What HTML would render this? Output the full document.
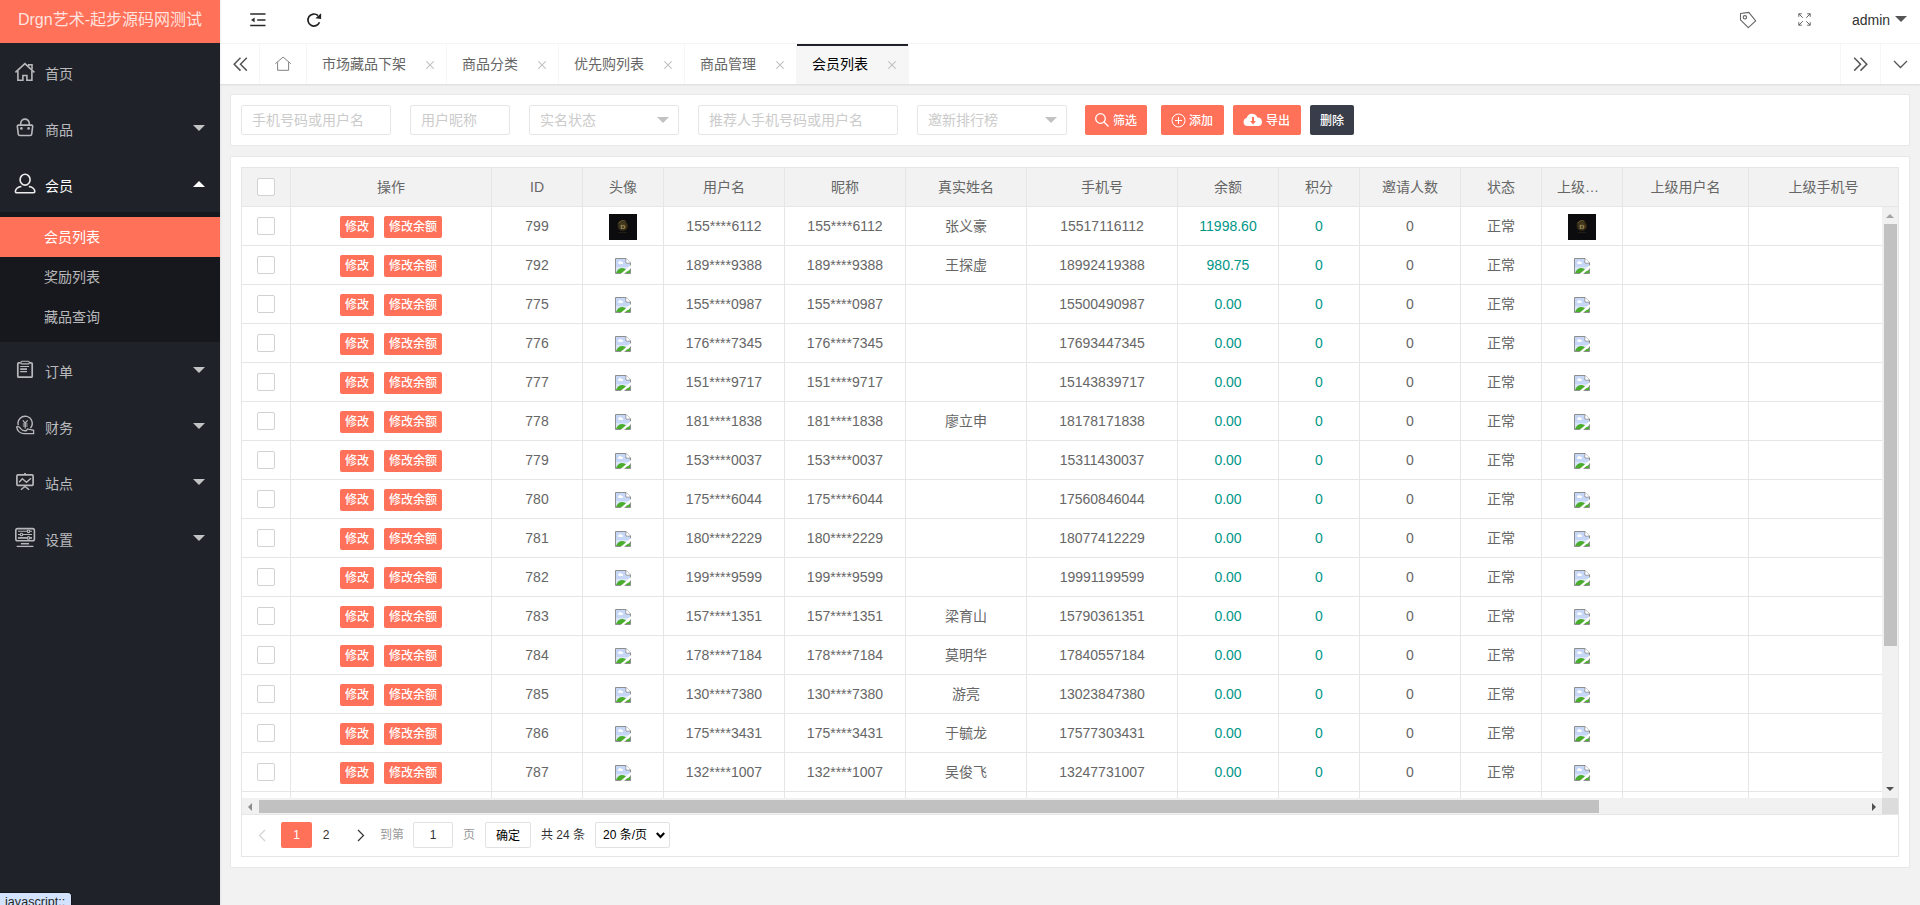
<!DOCTYPE html>
<html lang="zh-CN">
<head>
<meta charset="utf-8">
<title>会员列表</title>
<style>
*{box-sizing:border-box;margin:0;padding:0}
html,body{width:1920px;height:905px;overflow:hidden}
body{font:14px/1 "Liberation Sans","Noto Sans CJK SC",sans-serif;background:#f2f2f2;color:#666;position:relative}
a{text-decoration:none;color:inherit}
i{font-style:normal}
svg{display:block}
.abs{position:absolute}

/* ---------- sidebar ---------- */
#side{position:absolute;left:0;top:0;width:220px;height:905px;background:#20222a;color:#d9dadb;z-index:5;box-shadow:1px 0 2px 0 rgba(0,0,0,.06)}
#logo{position:absolute;left:0;top:0;width:220px;height:43px;background:#FF7159;color:rgba(255,255,255,.82);font-size:16px;line-height:39px;text-align:center;white-space:nowrap}
.nav{position:absolute;left:0;top:44px;width:220px}
.ni{position:relative;height:56px;line-height:60px;padding-left:45px;font-size:14px;color:rgba(255,255,255,.7)}
.ni.on{color:#fff}
.ni svg.ic{position:absolute;left:14px;top:16px}
.ni .ar{position:absolute;right:15px;top:25px;width:0;height:0;border:6px solid transparent;border-top-color:#c2c3c4;border-bottom-width:0}
.ni .ar.up{border-top-width:0;border-bottom-width:6px;border-bottom-color:#fff;border-top-color:transparent}
.sub{background:#16181d;padding:5px 0}
.sub a{display:block;height:40px;line-height:40px;padding-left:44px;font-size:14px;color:rgba(255,255,255,.7)}
.sub a.on{background:#FF7159;color:#fff}

/* ---------- header ---------- */
#head{position:absolute;left:220px;top:0;width:1700px;height:44px;background:#fff;border-bottom:1px solid #f6f6f6}
#head .hi{position:absolute;top:0}
#admin{position:absolute;left:1632px;top:0;height:40px;line-height:40px;font-size:14px;color:#333}
#admin:after{content:"";position:absolute;left:43px;top:16px;border:6px solid transparent;border-top-color:#555;border-bottom-width:0}

/* ---------- tabs ---------- */
#tabs{position:absolute;left:220px;top:44px;width:1700px;height:40px;background:#fff;box-shadow:0 1px 2px 0 rgba(0,0,0,.1)}
.tb{position:absolute;top:0;height:40px;line-height:40px;border-right:1px solid #f6f6f6;color:#666;font-size:14px;padding-left:15px;white-space:nowrap}
.tb.on{background:#f6f6f6;color:#000}
.tb.on:before{content:"";position:absolute;left:0;top:0;width:100%;height:2px;background:#20222a}
.tb .x{position:absolute;right:12.500px;top:16.500px}
.tc{position:absolute;top:0;width:40px;height:40px}
.tc svg{position:absolute}

/* ---------- cards ---------- */
.card{position:absolute;left:230px;width:1680px;background:#fff;border:1px solid #e8e8e8;border-radius:2px}
.inp{position:absolute;top:10px;height:30px;border:1px solid #e6e6e6;border-radius:2px;background:#fff;line-height:28px;padding-left:10px;color:#cbcbcb;font-size:14px;white-space:nowrap}
.inp .ca{position:absolute;right:9px;top:11px;border:6px solid transparent;border-top-color:#c2c2c2;border-bottom-width:0}
.btn{position:absolute;top:10px;height:30px;line-height:32px;border-radius:2px;background:#FF7159;color:#fff;font-size:12px;white-space:nowrap}
.btn svg{position:absolute}
.btn span{position:absolute;top:0;font-weight:500}

/* ---------- table ---------- */
#tv{position:absolute;left:10px;top:10px;width:1658px;height:690px;border:1px solid #e6e6e6;overflow:hidden}
#th{position:absolute;left:0;top:0;width:1656px;height:39px;background:#f2f2f2;border-bottom:1px solid #e6e6e6;overflow:hidden}
#tbw{position:absolute;left:0;top:39px;width:1640px;height:591px;overflow:hidden}
table{border-collapse:separate;border-spacing:0;table-layout:fixed;width:1657px}
th,td{height:39px;border-right:1px solid #e6e6e6;border-bottom:1px solid #e6e6e6;text-align:center;font-weight:400;font-size:14px;color:#666;vertical-align:middle;white-space:nowrap;overflow:hidden;padding:0}
th{border-bottom:0;height:38px}
td.g{color:#009688}
.el{margin:0 15px;overflow:hidden;text-overflow:ellipsis;white-space:nowrap;line-height:38px;text-align:left}
.cb{display:inline-block;width:18px;height:18px;border:1px solid #d2d2d2;border-radius:2px;background:#fff;vertical-align:middle}
.xs{font-weight:500;position:relative;top:1px;display:inline-block;height:22px;line-height:23px;padding:0 5px;font-size:12px;background:#FF7159;color:#fff;border-radius:2px;vertical-align:middle}
.x2{margin-left:10px}
.bk,.av{display:inline-block;vertical-align:middle}
.av{position:relative;top:1px}
.bk{position:relative;top:1px}

/* scrollbars */
#vs{position:absolute;left:1640px;top:39px;width:17px;height:591px;background:#f1f1f1}
#vs b{position:absolute;left:2px;top:17px;width:13px;height:422px;background:#c1c1c1}
#hs{position:absolute;left:0;top:630px;width:1640px;height:17px;background:#f1f1f1}
#hs b{position:absolute;left:17px;top:2px;width:1340px;height:13px;background:#c1c1c1}
#cn{position:absolute;left:1640px;top:630px;width:17px;height:17px;background:#dcdcdc}
.tri{position:absolute;width:0;height:0;border:4px solid transparent}

/* pagination */
#pg{position:absolute;left:0;top:647px;width:1656px;height:42px;font-size:12px;color:#333}
#pg .p{position:absolute;top:7px;height:26px;line-height:26px}
</style>
</head>
<body>

<div id="side">
  <div id="logo">Drgn艺术-起步源码网测试</div>
  <div class="nav">
    <div class="ni"><svg class="ic" width="24" height="24" viewBox="0 0 24 24" fill="none" stroke="#b7b8bb" stroke-width="1.6"><path d="M1.400 12.400L10.900 3.600l9.500 8.800"/><path d="M3.900 10.800v9.400h5v-4.700h4v4.700h5v-9.400"/><path d="M14.700 6.300V4.800h3.300v4.500"/></svg>首页</div>
    <div class="ni"><svg class="ic" width="24" height="24" viewBox="0 0 24 24" fill="none" stroke="#b7b8bb" stroke-width="1.6"><path d="M4.300 9.100h13.400a1 1 0 011 1.100l-1 8a1.500 1.500 0 01-1.500 1.300H5.800a1.500 1.500 0 01-1.500-1.300l-1-8a1 1 0 011-1.100z"/><path d="M6.700 9.100V7.400a4.300 4.300 0 018.600 0v1.700"/><circle cx="7.400" cy="12.400" r="1.300" fill="#b7b8bb" stroke="none"/><circle cx="14.600" cy="12.400" r="1.300" fill="#b7b8bb" stroke="none"/></svg>商品<i class="ar"></i></div>
    <div class="ni on"><svg class="ic" width="24" height="24" viewBox="0 0 24 24" fill="none" stroke="#ececec" stroke-width="1.6"><ellipse cx="11.100" cy="7.700" rx="5" ry="5.400"/><path d="M7.400 14.500C3.600 14.700 1.400 17.300 1.400 19.500a1.200 1.200 0 001.200 1.200h17a1.200 1.200 0 001.200-1.200c0-2.200-2.200-4.800-6-5"/></svg>会员<i class="ar up"></i></div>
    <div class="sub"><a class="on">会员列表</a><a>奖励列表</a><a>藏品查询</a></div>
    <div class="ni"><svg class="ic" width="24" height="24" viewBox="0 0 24 24" fill="none" stroke="#b7b8bb" stroke-width="1.7"><path d="M6.500 4.800H4.800a1 1 0 00-1 1v12.400a1 1 0 001 1h12.400a1 1 0 001-1V5.800a1 1 0 00-1-1h-1.700"/><rect x="6.900" y="3.200" width="8.400" height="2.700" rx="1" stroke-width="1.100"/><path d="M6.200 8.500h8.800M6.200 13.600h6.800" stroke-width="1.100"/><path d="M6.200 11.100h6.800" stroke-width="1.700"/></svg>订单<i class="ar"></i></div>
    <div class="ni"><svg class="ic" width="24" height="24" viewBox="0 0 24 24" fill="none" stroke="#b7b8bb" stroke-width="1.400"><path d="M4.300 11.300A7.100 7.100 0 1116.500 14"/><path d="M8.800 6.400l2.400 2.800 2.400-2.800M11.200 9.200v5.300M8.800 10h4.800M8.800 12h4.800" stroke-width="1.200"/><path d="M2.700 12.900c1.600-.7 3 .2 4 1.700 1.400 2 3.400 2.500 5.800 2l.9-1.700 6.200 1.400v3.300H9.800c-4 0-6.800-3-7.100-6.700z" stroke-width="1.300"/></svg>财务<i class="ar"></i></div>
    <div class="ni"><svg class="ic" width="24" height="24" viewBox="0 0 24 24" fill="none" stroke="#b7b8bb" stroke-width="1.700"><rect x="2.900" y="4.900" width="16.200" height="10.400" rx="1"/><path d="M11 3v1.900" stroke-width="1.800"/><path d="M5.100 12.300l3.200-3.600 4.200 3.600L17 8.300" stroke-width="1.400"/><path d="M6.900 19.800l4.100-3.300 4.100 3.300" stroke-width="1.400"/></svg>站点<i class="ar"></i></div>
    <div class="ni"><svg class="ic" width="24" height="24" viewBox="0 0 24 24" fill="none" stroke="#b7b8bb" stroke-width="1.600"><rect x="1.800" y="2.600" width="18.600" height="12.100" rx="1.800"/><path d="M4 5.300h14M4 8.500h14" stroke-width="1.100"/><path d="M4 11.900h14" stroke-width="1.700"/><circle cx="14.500" cy="5.300" r="1.300" fill="#20222a" stroke-width="1.100"/><circle cx="7.500" cy="8.500" r="1.300" fill="#20222a" stroke-width="1.100"/><circle cx="14.500" cy="11.900" r="1.300" fill="#20222a" stroke-width="1.100"/><path d="M6.900 17.700h8.100" stroke-width="1.500"/><path d="M2.700 20.400h16.700" stroke-width="1.300"/></svg>设置<i class="ar"></i></div>
  </div>
</div>

<div id="head">
  <svg class="hi" style="left:29px;top:11px" width="18" height="18" viewBox="0 0 18 18" fill="none" stroke="#2a2a2a" stroke-width="1.500"><path d="M1.200 3h15.300M8.200 8.900h8.300M1.200 14.500h15.300"/><path d="M5.600 6.600v4.600L2 8.900z" fill="#2a2a2a" stroke="none"/></svg>
  <svg class="hi" style="left:84px;top:10px" width="20" height="20" viewBox="0 0 20 20" fill="none" stroke="#222" stroke-width="1.700"><path d="M15.500 12.300A6 6 0 1113.900 5.500"/><path d="M17.100 3.300v5.600l-5.700-.6z" fill="#222" stroke="none"/></svg>
  <svg class="hi" style="left:1518px;top:10px" width="20" height="20" viewBox="0 0 20 20" fill="none" stroke="#666" stroke-width="1.100" stroke-linejoin="round"><path d="M2.500 3.500l8.300-1.100 6.900 8.400-7.400 6.900-7.800-7.900z"/><circle cx="6.900" cy="7.300" r="1.700"/></svg>
  <svg class="hi" style="left:1577.500px;top:13px" width="13" height="13" viewBox="0 0 13 13" fill="none" stroke="#666" stroke-width="1"><path d="M.8 3.800V.8h3M.8.800l4 4M12.200 3.800V.8h-3M12.200.800l-4 4M.8 9.200v3h3M.8 12.200l4-4M12.200 9.200v3h-3M12.200 12.200l-4-4"/></svg>
  <div id="admin">admin</div>
</div>

<div id="tabs">
  <div class="tc" style="left:0;border-right:1px solid #f6f6f6"><svg style="left:12.500px;top:13px" width="15" height="15" viewBox="0 0 15 15" fill="none" stroke="#555" stroke-width="1.500"><path d="M7.500.800L1.200 7.200l6.300 6.400M13.800.800L7.500 7.200l6.300 6.400"/></svg></div>
  <div class="tb" style="left:40px;width:47px;padding:0"><svg style="position:absolute;left:15px;top:11px" width="17" height="17" viewBox="0 0 17 17" fill="none" stroke="#808080" stroke-width="1"><path d="M.4 8.700L8.100 2.100l7.700 6.600"/><path d="M2.600 7.200v8.100h11V7.200"/></svg></div>
  <div class="tb" style="left:87px;width:140px">市场藏品下架<svg class="x" width="8" height="8" viewBox="0 0 8 8" stroke="#c2c2c2" stroke-width="1.100"><path d="M.3.300l7.400 7.400M7.700.300L.3 7.700"/></svg></div>
  <div class="tb" style="left:227px;width:112px">商品分类<svg class="x" width="8" height="8" viewBox="0 0 8 8" stroke="#c2c2c2" stroke-width="1.100"><path d="M.3.300l7.400 7.400M7.700.300L.3 7.700"/></svg></div>
  <div class="tb" style="left:339px;width:126px">优先购列表<svg class="x" width="8" height="8" viewBox="0 0 8 8" stroke="#c2c2c2" stroke-width="1.100"><path d="M.3.300l7.400 7.400M7.700.300L.3 7.700"/></svg></div>
  <div class="tb" style="left:465px;width:112px">商品管理<svg class="x" width="8" height="8" viewBox="0 0 8 8" stroke="#c2c2c2" stroke-width="1.100"><path d="M.3.300l7.400 7.400M7.700.300L.3 7.700"/></svg></div>
  <div class="tb on" style="left:577px;width:112px">会员列表<svg class="x" width="8" height="8" viewBox="0 0 8 8" stroke="#c2c2c2" stroke-width="1.100"><path d="M.3.300l7.400 7.400M7.700.300L.3 7.700"/></svg></div>
  <div class="tc" style="left:1620px;border-left:1px solid #f6f6f6"><svg style="left:11.500px;top:13px" width="15" height="15" viewBox="0 0 15 15" fill="none" stroke="#555" stroke-width="1.500"><path d="M1.200.800l6.300 6.400-6.300 6.400M7.500.800l6.300 6.400-6.300 6.400"/></svg></div>
  <div class="tc" style="left:1660px;border-left:1px solid #f6f6f6"><svg style="left:11.500px;top:16px" width="15" height="9" viewBox="0 0 15 9" fill="none" stroke="#555" stroke-width="1.300"><path d="M1 1l6.500 6.500L14 1"/></svg></div>
</div>

<div class="card" style="top:94px;height:52px">
  <div class="inp" style="left:10px;width:150px">手机号码或用户名</div>
  <div class="inp" style="left:179px;width:100px">用户昵称</div>
  <div class="inp" style="left:298px;width:150px">实名状态<i class="ca"></i></div>
  <div class="inp" style="left:467px;width:200px">推荐人手机号码或用户名</div>
  <div class="inp" style="left:686px;width:150px">邀新排行榜<i class="ca"></i></div>
  <a class="btn" style="left:854px;width:62px"><svg style="left:9px;top:7px" width="16" height="16" viewBox="0 0 16 16" fill="none" stroke="#fff" stroke-width="1.300"><circle cx="6.500" cy="6.500" r="4.800"/><path d="M10 10l4.500 4.500"/></svg><span style="left:28px">筛选</span></a>
  <a class="btn" style="left:930px;width:63px"><svg style="left:10px;top:8px" width="15" height="15" viewBox="0 0 15 15" fill="none" stroke="#fff" stroke-width="1"><circle cx="7.500" cy="7.500" r="6.500"/><path d="M7.500 4v7M4 7.500h7"/></svg><span style="left:28px">添加</span></a>
  <a class="btn" style="left:1002px;width:68px"><svg style="left:10px;top:7px" width="20" height="15" viewBox="0 0 20 15" fill="#fff"><path d="M4.500 14a4 4 0 01-.8-7.900 5.500 5.500 0 0110.600-.6A4.300 4.300 0 0115.500 14z"/><path d="M9 5h2v4h2l-3 3.500L7 9h2z" fill="#FF7159"/></svg><span style="left:33px">导出</span></a>
  <a class="btn" style="left:1079px;width:44px;background:#393d49"><span style="left:10px">删除</span></a>
</div>

<div class="card" style="top:156px;height:712px">
  <div id="tv">
    <div id="th"><table><colgroup><col style="width:49px"><col style="width:201px"><col style="width:91px"><col style="width:81px"><col style="width:121px"><col style="width:121px"><col style="width:121px"><col style="width:151px"><col style="width:101px"><col style="width:81px"><col style="width:101px"><col style="width:81px"><col style="width:81px"><col style="width:126px"><col style="width:150px"></colgroup><thead><tr><th><i class="cb"></i></th><th>操作</th><th>ID</th><th>头像</th><th>用户名</th><th>昵称</th><th>真实姓名</th><th>手机号</th><th>余额</th><th>积分</th><th>邀请人数</th><th>状态</th><th><div class="el">上级头像</div></th><th>上级用户名</th><th>上级手机号</th></tr></thead></table></div>
    <div id="tbw"><table><colgroup><col style="width:49px"><col style="width:201px"><col style="width:91px"><col style="width:81px"><col style="width:121px"><col style="width:121px"><col style="width:121px"><col style="width:151px"><col style="width:101px"><col style="width:81px"><col style="width:101px"><col style="width:81px"><col style="width:81px"><col style="width:126px"><col style="width:150px"></colgroup><tbody>
<tr><td><i class="cb"></i></td><td><a class="xs">修改</a><a class="xs x2">修改余额</a></td><td>799</td><td><span class="av"><svg width="28" height="26" viewBox="0 0 28 26"><defs><radialGradient id="gd"><stop offset="0" stop-color="#5a4b26"/><stop offset=".7" stop-color="#3a3019"/><stop offset="1" stop-color="#17130c"/></radialGradient></defs><rect width="28" height="26" fill="#0c0b0d"/><circle cx="13.700" cy="11.900" r="5.600" fill="url(#gd)"/><path d="M9.500 9.500a5 5 0 017-2.200" fill="none" stroke="#8a7640" stroke-width=".8"/><text x="13.900" y="14.600" text-anchor="middle" font-family="Liberation Serif, serif" font-size="7" font-weight="400" fill="#b5a676">D</text><rect x="9.500" y="18" width="8.500" height=".8" fill="#2a2418"/></svg></span></td><td>155****6112</td><td>155****6112</td><td>张义豪</td><td>15517116112</td><td class="g">11998.60</td><td class="g">0</td><td>0</td><td>正常</td><td><span class="av"><svg width="28" height="26" viewBox="0 0 28 26"><defs><radialGradient id="gd"><stop offset="0" stop-color="#5a4b26"/><stop offset=".7" stop-color="#3a3019"/><stop offset="1" stop-color="#17130c"/></radialGradient></defs><rect width="28" height="26" fill="#0c0b0d"/><circle cx="13.700" cy="11.900" r="5.600" fill="url(#gd)"/><path d="M9.500 9.500a5 5 0 017-2.200" fill="none" stroke="#8a7640" stroke-width=".8"/><text x="13.900" y="14.600" text-anchor="middle" font-family="Liberation Serif, serif" font-size="7" font-weight="400" fill="#b5a676">D</text><rect x="9.500" y="18" width="8.500" height=".8" fill="#2a2418"/></svg></span></td><td></td><td></td></tr>
<tr><td><i class="cb"></i></td><td><a class="xs">修改</a><a class="xs x2">修改余额</a></td><td>792</td><td><svg class="bk" width="16" height="16" viewBox="0 0 16 16"><path d="M.5.500H11L15.500 5v10.500H.5z" fill="#c6d6f7" stroke="#8f8f8f"/><path d="M1 9h14v6H1z" fill="#dbe5fa"/><path d="M11 .5V5h4.500" fill="#fff" stroke="#8f8f8f"/><path d="M11.500 1.200V4.500h3.300z" fill="#fff"/><ellipse cx="5.600" cy="4.900" rx="2.700" ry="1.100" fill="#fff"/><circle cx="5.200" cy="4.200" r="1.200" fill="#fff"/><path d="M1 15C2 11.800 4.800 9.900 7.500 10c2.700.1 5 2 6.300 5z" fill="#4aad2c"/><path d="M11 15l4-3.500V15z" fill="#4aad2c"/><path d="M6.300 16.800L17 7.600" stroke="#fff" stroke-width="2.300"/></svg></td><td>189****9388</td><td>189****9388</td><td>王探虚</td><td>18992419388</td><td class="g">980.75</td><td class="g">0</td><td>0</td><td>正常</td><td><svg class="bk" width="16" height="16" viewBox="0 0 16 16"><path d="M.5.500H11L15.500 5v10.500H.5z" fill="#c6d6f7" stroke="#8f8f8f"/><path d="M1 9h14v6H1z" fill="#dbe5fa"/><path d="M11 .5V5h4.500" fill="#fff" stroke="#8f8f8f"/><path d="M11.500 1.200V4.500h3.300z" fill="#fff"/><ellipse cx="5.600" cy="4.900" rx="2.700" ry="1.100" fill="#fff"/><circle cx="5.200" cy="4.200" r="1.200" fill="#fff"/><path d="M1 15C2 11.800 4.800 9.900 7.500 10c2.700.1 5 2 6.300 5z" fill="#4aad2c"/><path d="M11 15l4-3.500V15z" fill="#4aad2c"/><path d="M6.300 16.800L17 7.600" stroke="#fff" stroke-width="2.300"/></svg></td><td></td><td></td></tr>
<tr><td><i class="cb"></i></td><td><a class="xs">修改</a><a class="xs x2">修改余额</a></td><td>775</td><td><svg class="bk" width="16" height="16" viewBox="0 0 16 16"><path d="M.5.500H11L15.500 5v10.500H.5z" fill="#c6d6f7" stroke="#8f8f8f"/><path d="M1 9h14v6H1z" fill="#dbe5fa"/><path d="M11 .5V5h4.500" fill="#fff" stroke="#8f8f8f"/><path d="M11.500 1.200V4.500h3.300z" fill="#fff"/><ellipse cx="5.600" cy="4.900" rx="2.700" ry="1.100" fill="#fff"/><circle cx="5.200" cy="4.200" r="1.200" fill="#fff"/><path d="M1 15C2 11.800 4.800 9.900 7.500 10c2.700.1 5 2 6.300 5z" fill="#4aad2c"/><path d="M11 15l4-3.500V15z" fill="#4aad2c"/><path d="M6.300 16.800L17 7.600" stroke="#fff" stroke-width="2.300"/></svg></td><td>155****0987</td><td>155****0987</td><td></td><td>15500490987</td><td class="g">0.00</td><td class="g">0</td><td>0</td><td>正常</td><td><svg class="bk" width="16" height="16" viewBox="0 0 16 16"><path d="M.5.500H11L15.500 5v10.500H.5z" fill="#c6d6f7" stroke="#8f8f8f"/><path d="M1 9h14v6H1z" fill="#dbe5fa"/><path d="M11 .5V5h4.500" fill="#fff" stroke="#8f8f8f"/><path d="M11.500 1.200V4.500h3.300z" fill="#fff"/><ellipse cx="5.600" cy="4.900" rx="2.700" ry="1.100" fill="#fff"/><circle cx="5.200" cy="4.200" r="1.200" fill="#fff"/><path d="M1 15C2 11.800 4.800 9.900 7.500 10c2.700.1 5 2 6.300 5z" fill="#4aad2c"/><path d="M11 15l4-3.500V15z" fill="#4aad2c"/><path d="M6.300 16.800L17 7.600" stroke="#fff" stroke-width="2.300"/></svg></td><td></td><td></td></tr>
<tr><td><i class="cb"></i></td><td><a class="xs">修改</a><a class="xs x2">修改余额</a></td><td>776</td><td><svg class="bk" width="16" height="16" viewBox="0 0 16 16"><path d="M.5.500H11L15.500 5v10.500H.5z" fill="#c6d6f7" stroke="#8f8f8f"/><path d="M1 9h14v6H1z" fill="#dbe5fa"/><path d="M11 .5V5h4.500" fill="#fff" stroke="#8f8f8f"/><path d="M11.500 1.200V4.500h3.300z" fill="#fff"/><ellipse cx="5.600" cy="4.900" rx="2.700" ry="1.100" fill="#fff"/><circle cx="5.200" cy="4.200" r="1.200" fill="#fff"/><path d="M1 15C2 11.800 4.800 9.900 7.500 10c2.700.1 5 2 6.300 5z" fill="#4aad2c"/><path d="M11 15l4-3.500V15z" fill="#4aad2c"/><path d="M6.300 16.800L17 7.600" stroke="#fff" stroke-width="2.300"/></svg></td><td>176****7345</td><td>176****7345</td><td></td><td>17693447345</td><td class="g">0.00</td><td class="g">0</td><td>0</td><td>正常</td><td><svg class="bk" width="16" height="16" viewBox="0 0 16 16"><path d="M.5.500H11L15.500 5v10.500H.5z" fill="#c6d6f7" stroke="#8f8f8f"/><path d="M1 9h14v6H1z" fill="#dbe5fa"/><path d="M11 .5V5h4.500" fill="#fff" stroke="#8f8f8f"/><path d="M11.500 1.200V4.500h3.300z" fill="#fff"/><ellipse cx="5.600" cy="4.900" rx="2.700" ry="1.100" fill="#fff"/><circle cx="5.200" cy="4.200" r="1.200" fill="#fff"/><path d="M1 15C2 11.800 4.800 9.900 7.500 10c2.700.1 5 2 6.300 5z" fill="#4aad2c"/><path d="M11 15l4-3.500V15z" fill="#4aad2c"/><path d="M6.300 16.800L17 7.600" stroke="#fff" stroke-width="2.300"/></svg></td><td></td><td></td></tr>
<tr><td><i class="cb"></i></td><td><a class="xs">修改</a><a class="xs x2">修改余额</a></td><td>777</td><td><svg class="bk" width="16" height="16" viewBox="0 0 16 16"><path d="M.5.500H11L15.500 5v10.500H.5z" fill="#c6d6f7" stroke="#8f8f8f"/><path d="M1 9h14v6H1z" fill="#dbe5fa"/><path d="M11 .5V5h4.500" fill="#fff" stroke="#8f8f8f"/><path d="M11.500 1.200V4.500h3.300z" fill="#fff"/><ellipse cx="5.600" cy="4.900" rx="2.700" ry="1.100" fill="#fff"/><circle cx="5.200" cy="4.200" r="1.200" fill="#fff"/><path d="M1 15C2 11.800 4.800 9.900 7.500 10c2.700.1 5 2 6.300 5z" fill="#4aad2c"/><path d="M11 15l4-3.500V15z" fill="#4aad2c"/><path d="M6.300 16.800L17 7.600" stroke="#fff" stroke-width="2.300"/></svg></td><td>151****9717</td><td>151****9717</td><td></td><td>15143839717</td><td class="g">0.00</td><td class="g">0</td><td>0</td><td>正常</td><td><svg class="bk" width="16" height="16" viewBox="0 0 16 16"><path d="M.5.500H11L15.500 5v10.500H.5z" fill="#c6d6f7" stroke="#8f8f8f"/><path d="M1 9h14v6H1z" fill="#dbe5fa"/><path d="M11 .5V5h4.500" fill="#fff" stroke="#8f8f8f"/><path d="M11.500 1.200V4.500h3.300z" fill="#fff"/><ellipse cx="5.600" cy="4.900" rx="2.700" ry="1.100" fill="#fff"/><circle cx="5.200" cy="4.200" r="1.200" fill="#fff"/><path d="M1 15C2 11.800 4.800 9.900 7.500 10c2.700.1 5 2 6.300 5z" fill="#4aad2c"/><path d="M11 15l4-3.500V15z" fill="#4aad2c"/><path d="M6.300 16.800L17 7.600" stroke="#fff" stroke-width="2.300"/></svg></td><td></td><td></td></tr>
<tr><td><i class="cb"></i></td><td><a class="xs">修改</a><a class="xs x2">修改余额</a></td><td>778</td><td><svg class="bk" width="16" height="16" viewBox="0 0 16 16"><path d="M.5.500H11L15.500 5v10.500H.5z" fill="#c6d6f7" stroke="#8f8f8f"/><path d="M1 9h14v6H1z" fill="#dbe5fa"/><path d="M11 .5V5h4.500" fill="#fff" stroke="#8f8f8f"/><path d="M11.500 1.200V4.500h3.300z" fill="#fff"/><ellipse cx="5.600" cy="4.900" rx="2.700" ry="1.100" fill="#fff"/><circle cx="5.200" cy="4.200" r="1.200" fill="#fff"/><path d="M1 15C2 11.800 4.800 9.900 7.500 10c2.700.1 5 2 6.300 5z" fill="#4aad2c"/><path d="M11 15l4-3.500V15z" fill="#4aad2c"/><path d="M6.300 16.800L17 7.600" stroke="#fff" stroke-width="2.300"/></svg></td><td>181****1838</td><td>181****1838</td><td>廖立申</td><td>18178171838</td><td class="g">0.00</td><td class="g">0</td><td>0</td><td>正常</td><td><svg class="bk" width="16" height="16" viewBox="0 0 16 16"><path d="M.5.500H11L15.500 5v10.500H.5z" fill="#c6d6f7" stroke="#8f8f8f"/><path d="M1 9h14v6H1z" fill="#dbe5fa"/><path d="M11 .5V5h4.500" fill="#fff" stroke="#8f8f8f"/><path d="M11.500 1.200V4.500h3.300z" fill="#fff"/><ellipse cx="5.600" cy="4.900" rx="2.700" ry="1.100" fill="#fff"/><circle cx="5.200" cy="4.200" r="1.200" fill="#fff"/><path d="M1 15C2 11.800 4.800 9.900 7.500 10c2.700.1 5 2 6.300 5z" fill="#4aad2c"/><path d="M11 15l4-3.500V15z" fill="#4aad2c"/><path d="M6.300 16.800L17 7.600" stroke="#fff" stroke-width="2.300"/></svg></td><td></td><td></td></tr>
<tr><td><i class="cb"></i></td><td><a class="xs">修改</a><a class="xs x2">修改余额</a></td><td>779</td><td><svg class="bk" width="16" height="16" viewBox="0 0 16 16"><path d="M.5.500H11L15.500 5v10.500H.5z" fill="#c6d6f7" stroke="#8f8f8f"/><path d="M1 9h14v6H1z" fill="#dbe5fa"/><path d="M11 .5V5h4.500" fill="#fff" stroke="#8f8f8f"/><path d="M11.500 1.200V4.500h3.300z" fill="#fff"/><ellipse cx="5.600" cy="4.900" rx="2.700" ry="1.100" fill="#fff"/><circle cx="5.200" cy="4.200" r="1.200" fill="#fff"/><path d="M1 15C2 11.800 4.800 9.900 7.500 10c2.700.1 5 2 6.300 5z" fill="#4aad2c"/><path d="M11 15l4-3.500V15z" fill="#4aad2c"/><path d="M6.300 16.800L17 7.600" stroke="#fff" stroke-width="2.300"/></svg></td><td>153****0037</td><td>153****0037</td><td></td><td>15311430037</td><td class="g">0.00</td><td class="g">0</td><td>0</td><td>正常</td><td><svg class="bk" width="16" height="16" viewBox="0 0 16 16"><path d="M.5.500H11L15.500 5v10.500H.5z" fill="#c6d6f7" stroke="#8f8f8f"/><path d="M1 9h14v6H1z" fill="#dbe5fa"/><path d="M11 .5V5h4.500" fill="#fff" stroke="#8f8f8f"/><path d="M11.500 1.200V4.500h3.300z" fill="#fff"/><ellipse cx="5.600" cy="4.900" rx="2.700" ry="1.100" fill="#fff"/><circle cx="5.200" cy="4.200" r="1.200" fill="#fff"/><path d="M1 15C2 11.800 4.800 9.900 7.500 10c2.700.1 5 2 6.300 5z" fill="#4aad2c"/><path d="M11 15l4-3.500V15z" fill="#4aad2c"/><path d="M6.300 16.800L17 7.600" stroke="#fff" stroke-width="2.300"/></svg></td><td></td><td></td></tr>
<tr><td><i class="cb"></i></td><td><a class="xs">修改</a><a class="xs x2">修改余额</a></td><td>780</td><td><svg class="bk" width="16" height="16" viewBox="0 0 16 16"><path d="M.5.500H11L15.500 5v10.500H.5z" fill="#c6d6f7" stroke="#8f8f8f"/><path d="M1 9h14v6H1z" fill="#dbe5fa"/><path d="M11 .5V5h4.500" fill="#fff" stroke="#8f8f8f"/><path d="M11.500 1.200V4.500h3.300z" fill="#fff"/><ellipse cx="5.600" cy="4.900" rx="2.700" ry="1.100" fill="#fff"/><circle cx="5.200" cy="4.200" r="1.200" fill="#fff"/><path d="M1 15C2 11.800 4.800 9.900 7.500 10c2.700.1 5 2 6.300 5z" fill="#4aad2c"/><path d="M11 15l4-3.500V15z" fill="#4aad2c"/><path d="M6.300 16.800L17 7.600" stroke="#fff" stroke-width="2.300"/></svg></td><td>175****6044</td><td>175****6044</td><td></td><td>17560846044</td><td class="g">0.00</td><td class="g">0</td><td>0</td><td>正常</td><td><svg class="bk" width="16" height="16" viewBox="0 0 16 16"><path d="M.5.500H11L15.500 5v10.500H.5z" fill="#c6d6f7" stroke="#8f8f8f"/><path d="M1 9h14v6H1z" fill="#dbe5fa"/><path d="M11 .5V5h4.500" fill="#fff" stroke="#8f8f8f"/><path d="M11.500 1.200V4.500h3.300z" fill="#fff"/><ellipse cx="5.600" cy="4.900" rx="2.700" ry="1.100" fill="#fff"/><circle cx="5.200" cy="4.200" r="1.200" fill="#fff"/><path d="M1 15C2 11.800 4.800 9.900 7.500 10c2.700.1 5 2 6.300 5z" fill="#4aad2c"/><path d="M11 15l4-3.500V15z" fill="#4aad2c"/><path d="M6.300 16.800L17 7.600" stroke="#fff" stroke-width="2.300"/></svg></td><td></td><td></td></tr>
<tr><td><i class="cb"></i></td><td><a class="xs">修改</a><a class="xs x2">修改余额</a></td><td>781</td><td><svg class="bk" width="16" height="16" viewBox="0 0 16 16"><path d="M.5.500H11L15.500 5v10.500H.5z" fill="#c6d6f7" stroke="#8f8f8f"/><path d="M1 9h14v6H1z" fill="#dbe5fa"/><path d="M11 .5V5h4.500" fill="#fff" stroke="#8f8f8f"/><path d="M11.500 1.200V4.500h3.300z" fill="#fff"/><ellipse cx="5.600" cy="4.900" rx="2.700" ry="1.100" fill="#fff"/><circle cx="5.200" cy="4.200" r="1.200" fill="#fff"/><path d="M1 15C2 11.800 4.800 9.900 7.500 10c2.700.1 5 2 6.300 5z" fill="#4aad2c"/><path d="M11 15l4-3.500V15z" fill="#4aad2c"/><path d="M6.300 16.800L17 7.600" stroke="#fff" stroke-width="2.300"/></svg></td><td>180****2229</td><td>180****2229</td><td></td><td>18077412229</td><td class="g">0.00</td><td class="g">0</td><td>0</td><td>正常</td><td><svg class="bk" width="16" height="16" viewBox="0 0 16 16"><path d="M.5.500H11L15.500 5v10.500H.5z" fill="#c6d6f7" stroke="#8f8f8f"/><path d="M1 9h14v6H1z" fill="#dbe5fa"/><path d="M11 .5V5h4.500" fill="#fff" stroke="#8f8f8f"/><path d="M11.500 1.200V4.500h3.300z" fill="#fff"/><ellipse cx="5.600" cy="4.900" rx="2.700" ry="1.100" fill="#fff"/><circle cx="5.200" cy="4.200" r="1.200" fill="#fff"/><path d="M1 15C2 11.800 4.800 9.900 7.500 10c2.700.1 5 2 6.300 5z" fill="#4aad2c"/><path d="M11 15l4-3.500V15z" fill="#4aad2c"/><path d="M6.300 16.800L17 7.600" stroke="#fff" stroke-width="2.300"/></svg></td><td></td><td></td></tr>
<tr><td><i class="cb"></i></td><td><a class="xs">修改</a><a class="xs x2">修改余额</a></td><td>782</td><td><svg class="bk" width="16" height="16" viewBox="0 0 16 16"><path d="M.5.500H11L15.500 5v10.500H.5z" fill="#c6d6f7" stroke="#8f8f8f"/><path d="M1 9h14v6H1z" fill="#dbe5fa"/><path d="M11 .5V5h4.500" fill="#fff" stroke="#8f8f8f"/><path d="M11.500 1.200V4.500h3.300z" fill="#fff"/><ellipse cx="5.600" cy="4.900" rx="2.700" ry="1.100" fill="#fff"/><circle cx="5.200" cy="4.200" r="1.200" fill="#fff"/><path d="M1 15C2 11.800 4.800 9.900 7.500 10c2.700.1 5 2 6.300 5z" fill="#4aad2c"/><path d="M11 15l4-3.500V15z" fill="#4aad2c"/><path d="M6.300 16.800L17 7.600" stroke="#fff" stroke-width="2.300"/></svg></td><td>199****9599</td><td>199****9599</td><td></td><td>19991199599</td><td class="g">0.00</td><td class="g">0</td><td>0</td><td>正常</td><td><svg class="bk" width="16" height="16" viewBox="0 0 16 16"><path d="M.5.500H11L15.500 5v10.500H.5z" fill="#c6d6f7" stroke="#8f8f8f"/><path d="M1 9h14v6H1z" fill="#dbe5fa"/><path d="M11 .5V5h4.500" fill="#fff" stroke="#8f8f8f"/><path d="M11.500 1.200V4.500h3.300z" fill="#fff"/><ellipse cx="5.600" cy="4.900" rx="2.700" ry="1.100" fill="#fff"/><circle cx="5.200" cy="4.200" r="1.200" fill="#fff"/><path d="M1 15C2 11.800 4.800 9.900 7.500 10c2.700.1 5 2 6.300 5z" fill="#4aad2c"/><path d="M11 15l4-3.500V15z" fill="#4aad2c"/><path d="M6.300 16.800L17 7.600" stroke="#fff" stroke-width="2.300"/></svg></td><td></td><td></td></tr>
<tr><td><i class="cb"></i></td><td><a class="xs">修改</a><a class="xs x2">修改余额</a></td><td>783</td><td><svg class="bk" width="16" height="16" viewBox="0 0 16 16"><path d="M.5.500H11L15.500 5v10.500H.5z" fill="#c6d6f7" stroke="#8f8f8f"/><path d="M1 9h14v6H1z" fill="#dbe5fa"/><path d="M11 .5V5h4.500" fill="#fff" stroke="#8f8f8f"/><path d="M11.500 1.200V4.500h3.300z" fill="#fff"/><ellipse cx="5.600" cy="4.900" rx="2.700" ry="1.100" fill="#fff"/><circle cx="5.200" cy="4.200" r="1.200" fill="#fff"/><path d="M1 15C2 11.800 4.800 9.900 7.500 10c2.700.1 5 2 6.300 5z" fill="#4aad2c"/><path d="M11 15l4-3.500V15z" fill="#4aad2c"/><path d="M6.300 16.800L17 7.600" stroke="#fff" stroke-width="2.300"/></svg></td><td>157****1351</td><td>157****1351</td><td>梁育山</td><td>15790361351</td><td class="g">0.00</td><td class="g">0</td><td>0</td><td>正常</td><td><svg class="bk" width="16" height="16" viewBox="0 0 16 16"><path d="M.5.500H11L15.500 5v10.500H.5z" fill="#c6d6f7" stroke="#8f8f8f"/><path d="M1 9h14v6H1z" fill="#dbe5fa"/><path d="M11 .5V5h4.500" fill="#fff" stroke="#8f8f8f"/><path d="M11.500 1.200V4.500h3.300z" fill="#fff"/><ellipse cx="5.600" cy="4.900" rx="2.700" ry="1.100" fill="#fff"/><circle cx="5.200" cy="4.200" r="1.200" fill="#fff"/><path d="M1 15C2 11.800 4.800 9.900 7.500 10c2.700.1 5 2 6.300 5z" fill="#4aad2c"/><path d="M11 15l4-3.500V15z" fill="#4aad2c"/><path d="M6.300 16.800L17 7.600" stroke="#fff" stroke-width="2.300"/></svg></td><td></td><td></td></tr>
<tr><td><i class="cb"></i></td><td><a class="xs">修改</a><a class="xs x2">修改余额</a></td><td>784</td><td><svg class="bk" width="16" height="16" viewBox="0 0 16 16"><path d="M.5.500H11L15.500 5v10.500H.5z" fill="#c6d6f7" stroke="#8f8f8f"/><path d="M1 9h14v6H1z" fill="#dbe5fa"/><path d="M11 .5V5h4.500" fill="#fff" stroke="#8f8f8f"/><path d="M11.500 1.200V4.500h3.300z" fill="#fff"/><ellipse cx="5.600" cy="4.900" rx="2.700" ry="1.100" fill="#fff"/><circle cx="5.200" cy="4.200" r="1.200" fill="#fff"/><path d="M1 15C2 11.800 4.800 9.900 7.500 10c2.700.1 5 2 6.300 5z" fill="#4aad2c"/><path d="M11 15l4-3.500V15z" fill="#4aad2c"/><path d="M6.300 16.800L17 7.600" stroke="#fff" stroke-width="2.300"/></svg></td><td>178****7184</td><td>178****7184</td><td>莫明华</td><td>17840557184</td><td class="g">0.00</td><td class="g">0</td><td>0</td><td>正常</td><td><svg class="bk" width="16" height="16" viewBox="0 0 16 16"><path d="M.5.500H11L15.500 5v10.500H.5z" fill="#c6d6f7" stroke="#8f8f8f"/><path d="M1 9h14v6H1z" fill="#dbe5fa"/><path d="M11 .5V5h4.500" fill="#fff" stroke="#8f8f8f"/><path d="M11.500 1.200V4.500h3.300z" fill="#fff"/><ellipse cx="5.600" cy="4.900" rx="2.700" ry="1.100" fill="#fff"/><circle cx="5.200" cy="4.200" r="1.200" fill="#fff"/><path d="M1 15C2 11.800 4.800 9.900 7.500 10c2.700.1 5 2 6.300 5z" fill="#4aad2c"/><path d="M11 15l4-3.500V15z" fill="#4aad2c"/><path d="M6.300 16.800L17 7.600" stroke="#fff" stroke-width="2.300"/></svg></td><td></td><td></td></tr>
<tr><td><i class="cb"></i></td><td><a class="xs">修改</a><a class="xs x2">修改余额</a></td><td>785</td><td><svg class="bk" width="16" height="16" viewBox="0 0 16 16"><path d="M.5.500H11L15.500 5v10.500H.5z" fill="#c6d6f7" stroke="#8f8f8f"/><path d="M1 9h14v6H1z" fill="#dbe5fa"/><path d="M11 .5V5h4.500" fill="#fff" stroke="#8f8f8f"/><path d="M11.500 1.200V4.500h3.300z" fill="#fff"/><ellipse cx="5.600" cy="4.900" rx="2.700" ry="1.100" fill="#fff"/><circle cx="5.200" cy="4.200" r="1.200" fill="#fff"/><path d="M1 15C2 11.800 4.800 9.900 7.500 10c2.700.1 5 2 6.300 5z" fill="#4aad2c"/><path d="M11 15l4-3.500V15z" fill="#4aad2c"/><path d="M6.300 16.800L17 7.600" stroke="#fff" stroke-width="2.300"/></svg></td><td>130****7380</td><td>130****7380</td><td>游亮</td><td>13023847380</td><td class="g">0.00</td><td class="g">0</td><td>0</td><td>正常</td><td><svg class="bk" width="16" height="16" viewBox="0 0 16 16"><path d="M.5.500H11L15.500 5v10.500H.5z" fill="#c6d6f7" stroke="#8f8f8f"/><path d="M1 9h14v6H1z" fill="#dbe5fa"/><path d="M11 .5V5h4.500" fill="#fff" stroke="#8f8f8f"/><path d="M11.500 1.200V4.500h3.300z" fill="#fff"/><ellipse cx="5.600" cy="4.900" rx="2.700" ry="1.100" fill="#fff"/><circle cx="5.200" cy="4.200" r="1.200" fill="#fff"/><path d="M1 15C2 11.800 4.800 9.900 7.500 10c2.700.1 5 2 6.300 5z" fill="#4aad2c"/><path d="M11 15l4-3.500V15z" fill="#4aad2c"/><path d="M6.300 16.800L17 7.600" stroke="#fff" stroke-width="2.300"/></svg></td><td></td><td></td></tr>
<tr><td><i class="cb"></i></td><td><a class="xs">修改</a><a class="xs x2">修改余额</a></td><td>786</td><td><svg class="bk" width="16" height="16" viewBox="0 0 16 16"><path d="M.5.500H11L15.500 5v10.500H.5z" fill="#c6d6f7" stroke="#8f8f8f"/><path d="M1 9h14v6H1z" fill="#dbe5fa"/><path d="M11 .5V5h4.500" fill="#fff" stroke="#8f8f8f"/><path d="M11.500 1.200V4.500h3.300z" fill="#fff"/><ellipse cx="5.600" cy="4.900" rx="2.700" ry="1.100" fill="#fff"/><circle cx="5.200" cy="4.200" r="1.200" fill="#fff"/><path d="M1 15C2 11.800 4.800 9.900 7.500 10c2.700.1 5 2 6.300 5z" fill="#4aad2c"/><path d="M11 15l4-3.500V15z" fill="#4aad2c"/><path d="M6.300 16.800L17 7.600" stroke="#fff" stroke-width="2.300"/></svg></td><td>175****3431</td><td>175****3431</td><td>于毓龙</td><td>17577303431</td><td class="g">0.00</td><td class="g">0</td><td>0</td><td>正常</td><td><svg class="bk" width="16" height="16" viewBox="0 0 16 16"><path d="M.5.500H11L15.500 5v10.500H.5z" fill="#c6d6f7" stroke="#8f8f8f"/><path d="M1 9h14v6H1z" fill="#dbe5fa"/><path d="M11 .5V5h4.500" fill="#fff" stroke="#8f8f8f"/><path d="M11.500 1.200V4.500h3.300z" fill="#fff"/><ellipse cx="5.600" cy="4.900" rx="2.700" ry="1.100" fill="#fff"/><circle cx="5.200" cy="4.200" r="1.200" fill="#fff"/><path d="M1 15C2 11.800 4.800 9.900 7.500 10c2.700.1 5 2 6.300 5z" fill="#4aad2c"/><path d="M11 15l4-3.500V15z" fill="#4aad2c"/><path d="M6.300 16.800L17 7.600" stroke="#fff" stroke-width="2.300"/></svg></td><td></td><td></td></tr>
<tr><td><i class="cb"></i></td><td><a class="xs">修改</a><a class="xs x2">修改余额</a></td><td>787</td><td><svg class="bk" width="16" height="16" viewBox="0 0 16 16"><path d="M.5.500H11L15.500 5v10.500H.5z" fill="#c6d6f7" stroke="#8f8f8f"/><path d="M1 9h14v6H1z" fill="#dbe5fa"/><path d="M11 .5V5h4.500" fill="#fff" stroke="#8f8f8f"/><path d="M11.500 1.200V4.500h3.300z" fill="#fff"/><ellipse cx="5.600" cy="4.900" rx="2.700" ry="1.100" fill="#fff"/><circle cx="5.200" cy="4.200" r="1.200" fill="#fff"/><path d="M1 15C2 11.800 4.800 9.900 7.500 10c2.700.1 5 2 6.300 5z" fill="#4aad2c"/><path d="M11 15l4-3.500V15z" fill="#4aad2c"/><path d="M6.300 16.800L17 7.600" stroke="#fff" stroke-width="2.300"/></svg></td><td>132****1007</td><td>132****1007</td><td>吴俊飞</td><td>13247731007</td><td class="g">0.00</td><td class="g">0</td><td>0</td><td>正常</td><td><svg class="bk" width="16" height="16" viewBox="0 0 16 16"><path d="M.5.500H11L15.500 5v10.500H.5z" fill="#c6d6f7" stroke="#8f8f8f"/><path d="M1 9h14v6H1z" fill="#dbe5fa"/><path d="M11 .5V5h4.500" fill="#fff" stroke="#8f8f8f"/><path d="M11.500 1.200V4.500h3.300z" fill="#fff"/><ellipse cx="5.600" cy="4.900" rx="2.700" ry="1.100" fill="#fff"/><circle cx="5.200" cy="4.200" r="1.200" fill="#fff"/><path d="M1 15C2 11.800 4.800 9.900 7.500 10c2.700.1 5 2 6.300 5z" fill="#4aad2c"/><path d="M11 15l4-3.500V15z" fill="#4aad2c"/><path d="M6.300 16.800L17 7.600" stroke="#fff" stroke-width="2.300"/></svg></td><td></td><td></td></tr>
<tr><td></td><td></td><td></td><td></td><td></td><td></td><td></td><td></td><td></td><td></td><td></td><td></td><td></td><td></td><td></td></tr>
    </tbody></table></div>
    <div id="vs"><b></b><i class="tri" style="left:4px;top:7px;border-bottom-color:#a3a3a3;border-top-width:0;border-bottom-width:4px;border-left-width:4px;border-right-width:4px"></i><i class="tri" style="left:4px;top:580px;border-top-color:#505050;border-bottom-width:0"></i></div>
    <div id="hs"><b></b><i class="tri" style="left:6px;top:4.500px;border-right-color:#8c8c8c;border-left-width:0"></i><i class="tri" style="left:1630px;top:4.500px;border-left-color:#505050;border-right-width:0"></i></div>
    <div id="cn"></div>
    <div style="position:absolute;left:0;top:646px;width:1656px;height:1px;background:#e6e6e6"></div>
    <div id="pg">
      <svg style="position:absolute;left:16px;top:13.500px" width="8" height="13" viewBox="0 0 8 13" fill="none" stroke="#d2d2d2" stroke-width="1.200"><path d="M7 1L1.500 6.500 7 12"/></svg>
      <span class="p" style="left:39px;width:31px;background:#FF7159;color:#fff;text-align:center;border-radius:2px">1</span>
      <span class="p" style="left:70px;width:28px;text-align:center">2</span>
      <svg style="position:absolute;left:114.500px;top:13.500px" width="8" height="13" viewBox="0 0 8 13" fill="none" stroke="#333" stroke-width="1.200"><path d="M1 1l5.500 5.500L1 12"/></svg>
      <span class="p" style="left:138px;color:#999">到第</span>
      <span class="p" style="left:171px;width:40px;border:1px solid #e2e2e2;border-radius:2px;text-align:center;line-height:24px;background:#fff">1</span>
      <span class="p" style="left:221px;color:#999">页</span>
      <span class="p" style="left:243px;width:46px;border:1px solid #e2e2e2;border-radius:2px;text-align:center;line-height:26px;background:#fff;color:#000">确定</span>
      <span class="p" style="left:299px">共 24 条</span>
      <span class="p" style="left:353px;width:75px;border:1px solid #e2e2e2;border-radius:2px;line-height:24px;padding-left:7px;background:#fff;color:#000">20 条/页<svg style="position:absolute;left:59.500px;top:9px" width="9" height="7" viewBox="0 0 9 7" fill="none" stroke="#000" stroke-width="2.100"><path d="M.8 1l3.700 4L8.200 1"/></svg></span>
    </div>
  </div>
</div>

<div class="abs" style="z-index:10;left:0;top:892px;width:72px;height:13px;background:#d3e3fd;border-top:1px solid #15171c;border-right:1px solid #15171c;border-top-right-radius:4px;font-size:12.500px;letter-spacing:.05px;line-height:19px;color:#1f1f1f;padding-left:5px;overflow:hidden;white-space:nowrap">javascript:;</div>

</body>
</html>
